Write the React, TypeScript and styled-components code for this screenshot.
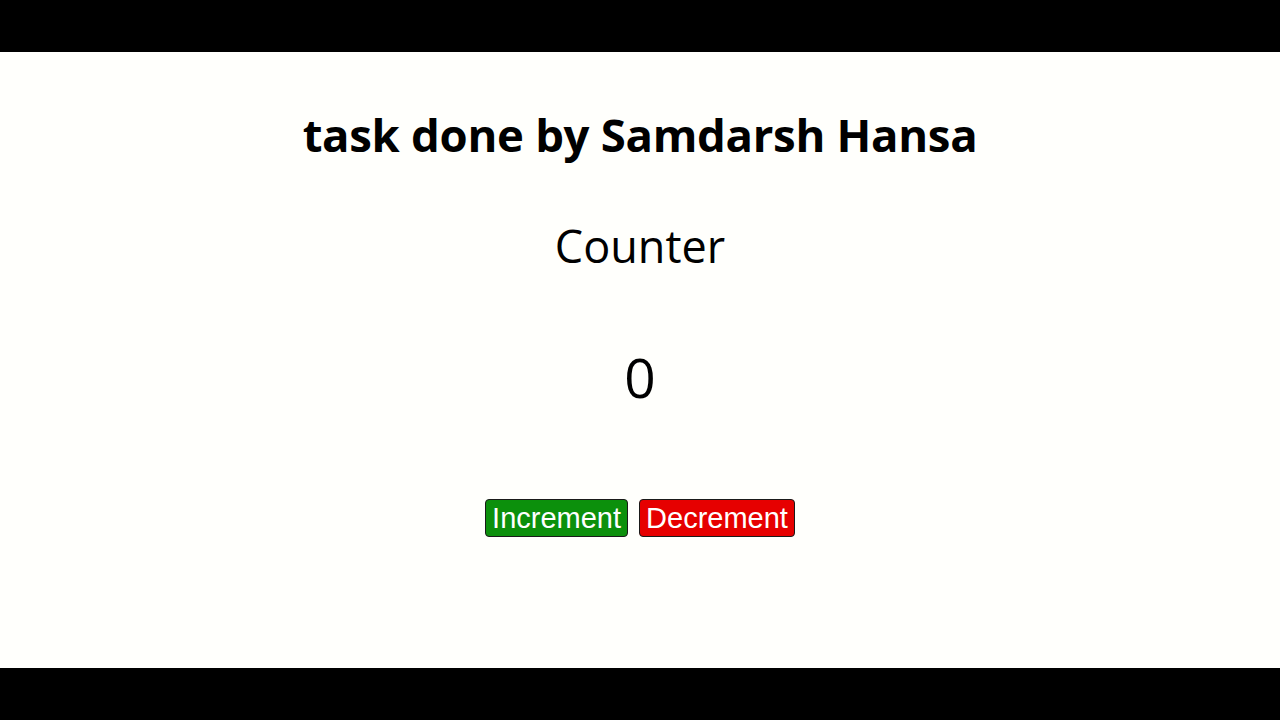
import React, { useState } from "react";
import styled, { createGlobalStyle } from "styled-components";

const GlobalStyle = createGlobalStyle`
  html, body {
    margin: 0;
    padding: 0;
    background: #000;
  }
`;

const Frame = styled.div`
  width: 1280px;
  height: 720px;
  background: #000;
  display: flex;
  flex-direction: column;
  justify-content: center;
`;

const Page = styled.main`
  height: 616px;
  background: #fffffc;
  display: flex;
  flex-direction: column;
  align-items: center;
  font-family: "Open Sans", "Noto Sans", sans-serif;
  color: #000;
`;

const Title = styled.h1`
  margin: 52px 0 0;
  font-size: 45.5px;
  font-weight: 700;
  line-height: 60px;
  letter-spacing: -0.3px;
`;

const Heading = styled.h2`
  margin: 52px 0 0;
  font-size: 45px;
  font-weight: 400;
  line-height: 60px;
`;

const Count = styled.div`
  margin: 66px 0 0;
  font-size: 55px;
  line-height: 70px;
`;

const ButtonRow = styled.div`
  margin-top: 87px;
  display: flex;
  gap: 11px;
`;

const Button = styled.button<{ $tone: string }>`
  height: 38px;
  padding: 0 6px;
  border: 1.5px solid #1a1a1a;
  border-radius: 4px;
  background: ${(p) => p.$tone};
  color: #fff;
  font-family: "Liberation Sans", Arial, sans-serif;
  font-size: 29px;
  line-height: 1;
  cursor: pointer;
`;

export default function App() {
  const [count, setCount] = useState(0);
  return (
    <>
      <GlobalStyle />
      <Frame>
        <Page>
          <Title>task done by Samdarsh Hansa</Title>
          <Heading>Counter</Heading>
          <Count>{count}</Count>
          <ButtonRow>
            <Button $tone="#0c900c" onClick={() => setCount(count + 1)}>
              Increment
            </Button>
            <Button $tone="#e60000" onClick={() => setCount(count - 1)}>
              Decrement
            </Button>
          </ButtonRow>
        </Page>
      </Frame>
    </>
  );
}
